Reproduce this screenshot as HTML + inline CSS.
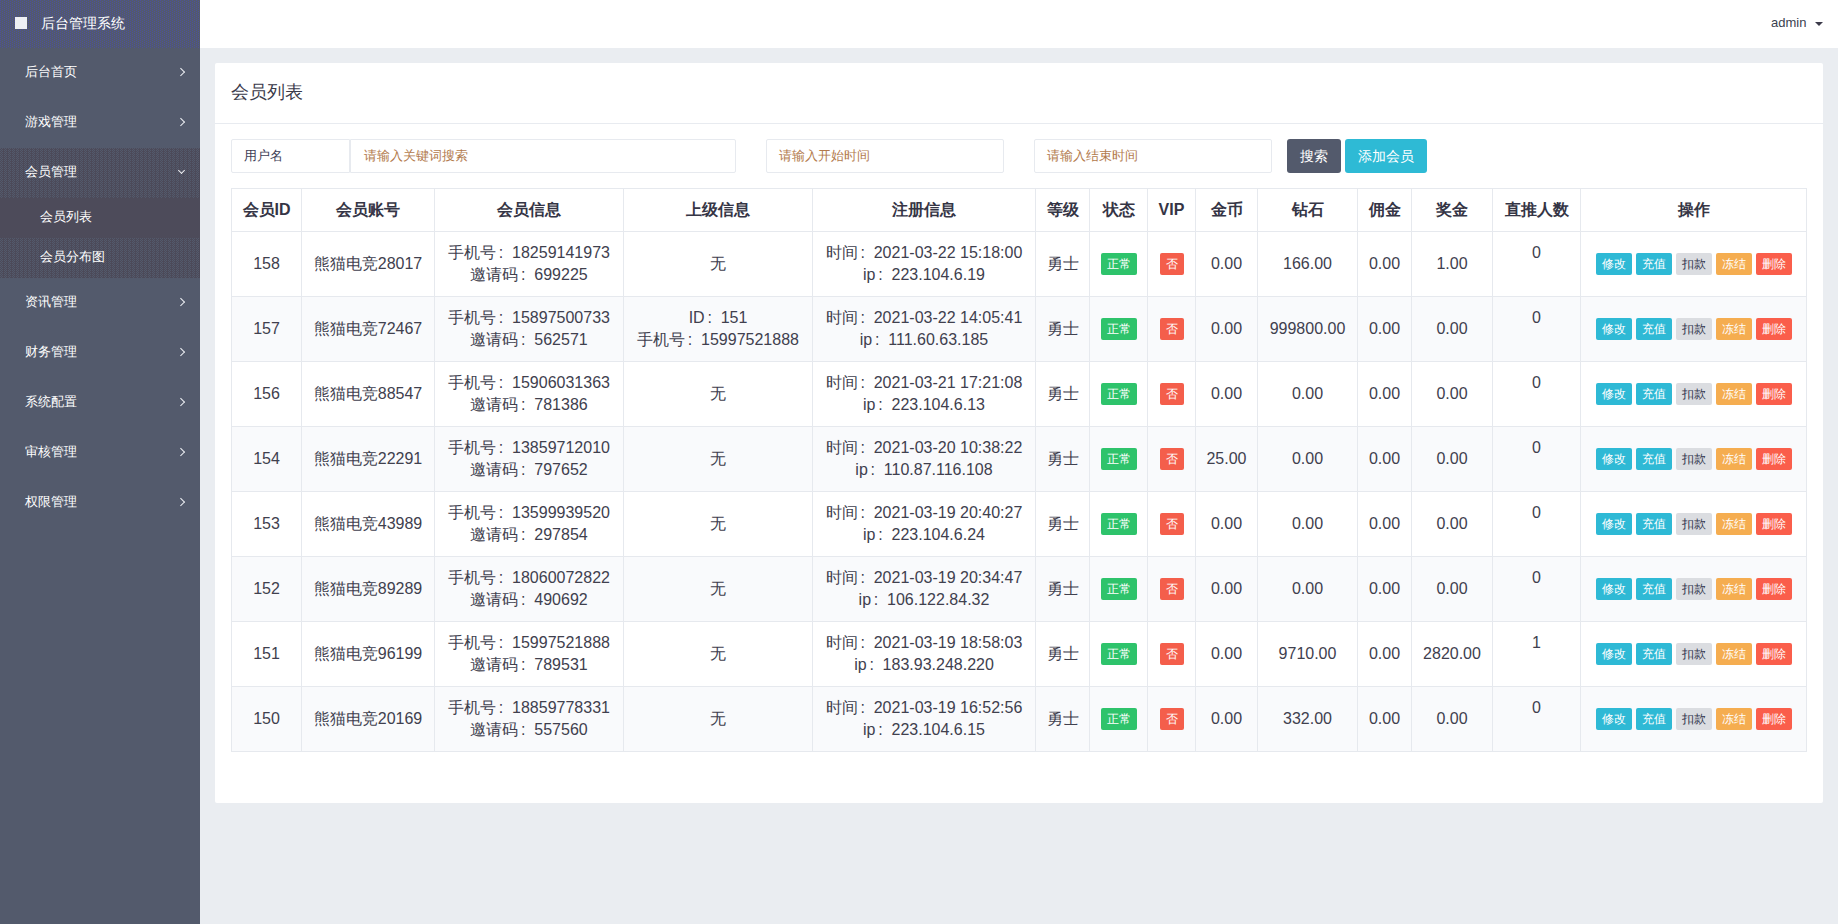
<!DOCTYPE html>
<html><head><meta charset="utf-8">
<style>
*{box-sizing:border-box;margin:0;padding:0}
html,body{width:1838px;height:924px;overflow:hidden}
body{font-family:"Liberation Sans",sans-serif;background:#eaedf1;color:#333;position:relative}
#side{position:absolute;left:0;top:0;width:200px;height:924px;background:#535a6c}
#logo{position:absolute;left:0;top:0;width:200px;height:48px;background:conic-gradient(from 270deg at 1px 1px,#4a4fa0 90deg,transparent 0) 0 0/4px 2px,conic-gradient(from 270deg at 1px 1px,#4a4fa0 90deg,transparent 0) 2px 1px/4px 2px,#535a6b;color:#fff;font-size:14px;line-height:48px}
#logo .sq{position:absolute;left:15px;top:17px;width:12px;height:12px;background:#eef0f4}
#logo .t{position:absolute;left:41px;top:-1px}
.mi{position:absolute;left:0;width:200px;height:50px;line-height:48px;color:#fff;font-size:13px;padding-left:25px}
.mi .ar{position:absolute;left:177.6px;top:20.8px;width:5.6px;height:5.6px;border-right:1.5px solid #eef0f4;border-top:1.5px solid #eef0f4;transform:rotate(45deg)}
.mi .dn{position:absolute;left:179px;top:20px;width:5px;height:5px;border-right:1.4px solid #eef0f4;border-bottom:1.4px solid #eef0f4;transform:rotate(45deg)}
.open{background:conic-gradient(from 270deg at 1px 1px,#535a6c 90deg,transparent 0) 0 0/4px 2px,conic-gradient(from 270deg at 1px 1px,#535a6c 90deg,transparent 0) 2px 0/4px 2px,conic-gradient(from 270deg at 1px 1px,#535a6c 90deg,transparent 0) 1px 1px/4px 2px,#4c4a59}
.sub{position:absolute;left:0;width:200px;height:40px;line-height:38px;color:#fff;font-size:13px;padding-left:40px;background:conic-gradient(from 270deg at 1px 1px,#535a6c 90deg,transparent 0) 0 0/4px 2px,conic-gradient(from 270deg at 1px 1px,#535a6c 90deg,transparent 0) 2px 0/4px 2px,conic-gradient(from 270deg at 1px 1px,#535a6c 90deg,transparent 0) 1px 1px/4px 2px,#4c4a59}
.sub.act{background:#4d4b5a}
#top{position:absolute;left:200px;top:0;width:1638px;height:48px;background:#fff}
#admin{position:absolute;left:1571px;top:0;line-height:46px;font-size:13px;color:#3b3f50}
#caret{position:absolute;left:1615px;top:22px;width:0;height:0;border-left:4px solid transparent;border-right:4px solid transparent;border-top:4px solid #3c3a4a}
#card{position:absolute;left:215px;top:63px;width:1608px;height:740px;background:#fff;border-radius:2px}
#ctitle{position:absolute;left:16px;top:0;height:60px;line-height:58px;font-size:18px;color:#3a3a4a}
#cline{position:absolute;left:0;top:60px;width:1608px;height:1px;background:#e8ebf0}
.box{position:absolute;top:76px;height:34px;border:1px solid #e7eaef;border-radius:2px;font-size:13px;line-height:32px;background:#fff}
.ph{color:#b27a4c}
.btn{position:absolute;top:76px;height:34px;border-radius:3px;color:#fff;font-size:14px;line-height:34px;text-align:center}
table{position:absolute;left:16px;top:125px;border-collapse:collapse;table-layout:fixed;width:1576px}
td,th{border:1px solid #e6e9ee;text-align:center;font-size:16px;color:#40404e;line-height:22px}
th{height:43px;font-weight:bold;color:#353545}
td{height:65px}
tr.s td{background:#f9fafc}
.bd{display:inline-block;vertical-align:top;position:relative;top:0px;height:22px;line-height:22px;font-size:12px;color:#fff;border-radius:2px;padding:0 6px}
.g{background:#2ec36b}
.r{background:#f45e4b}
.ab{display:inline-block;vertical-align:top;width:36px;height:22px;line-height:22px;font-size:12px;color:#fff;border-radius:2px;margin:0 2px}
.c{background:#2eb9d5}.gy{background:#dbdde1;color:#30334a}.o{background:#f5ad50}.rd{background:#fa5e4b}
.cn{display:inline-block;width:16px;padding-left:2.8px;text-align:left}
td.top{vertical-align:top;padding-top:10px}
</style></head><body>
<div id="side">
 <div id="logo"><div class="sq"></div><div class="t">后台管理系统</div></div>
 <div class="mi" style="top:48px">后台首页<i class="ar"></i></div>
 <div class="mi" style="top:98px">游戏管理<i class="ar"></i></div>
 <div class="mi open" style="top:148px">会员管理<i class="dn"></i></div>
 <div class="sub act" style="top:198px">会员列表</div>
 <div class="sub" style="top:238px">会员分布图</div>
 <div class="mi" style="top:278px">资讯管理<i class="ar"></i></div>
 <div class="mi" style="top:328px">财务管理<i class="ar"></i></div>
 <div class="mi" style="top:378px">系统配置<i class="ar"></i></div>
 <div class="mi" style="top:428px">审核管理<i class="ar"></i></div>
 <div class="mi" style="top:478px">权限管理<i class="ar"></i></div>
</div>
<div id="top"><div id="admin">admin</div><div id="caret"></div></div>
<div id="card">
 <div id="ctitle">会员列表</div>
 <div id="cline"></div>
 <div class="box" style="left:16px;width:119px;padding-left:12px;color:#3d3d55;border-radius:2px 0 0 2px">用户名</div>
 <div class="box ph" style="left:135px;width:386px;padding-left:13px;border-radius:0 2px 2px 0">请输入关键词搜索</div>
 <div class="box ph" style="left:551px;width:238px;padding-left:12px">请输入开始时间</div>
 <div class="box ph" style="left:819px;width:238px;padding-left:12px">请输入结束时间</div>
 <div class="btn" style="left:1072px;width:54px;background:#535a6c">搜索</div>
 <div class="btn" style="left:1130px;width:82px;background:#2ebad5">添加会员</div>
 <table>
 <colgroup><col style="width:70px"><col style="width:133px"><col style="width:189px"><col style="width:189px"><col style="width:223px"><col style="width:54px"><col style="width:58px"><col style="width:48px"><col style="width:62px"><col style="width:100px"><col style="width:54px"><col style="width:81px"><col style="width:88px"><col style="width:226px"></colgroup>
 <tr><th>会员ID</th><th>会员账号</th><th>会员信息</th><th>上级信息</th><th>注册信息</th><th>等级</th><th>状态</th><th>VIP</th><th>金币</th><th>钻石</th><th>佣金</th><th>奖金</th><th>直推人数</th><th>操作</th></tr>
 <tr><td>158</td><td>熊猫电竞28017</td><td>手机号<span class="cn">:</span>18259141973<br>邀请码<span class="cn">:</span>699225</td><td>无</td><td>时间<span class="cn">:</span>2021-03-22 15:18:00<br>ip<span class="cn">:</span>223.104.6.19</td><td>勇士</td><td><span class="bd g">正常</span></td><td><span class="bd r">否</span></td><td>0.00</td><td>166.00</td><td>0.00</td><td>1.00</td><td class="top">0</td><td><span class="ab c">修改</span><span class="ab c">充值</span><span class="ab gy">扣款</span><span class="ab o">冻结</span><span class="ab rd">删除</span></td></tr>
 <tr class="s"><td>157</td><td>熊猫电竞72467</td><td>手机号<span class="cn">:</span>15897500733<br>邀请码<span class="cn">:</span>562571</td><td>ID<span class="cn">:</span>151<br>手机号<span class="cn">:</span>15997521888</td><td>时间<span class="cn">:</span>2021-03-22 14:05:41<br>ip<span class="cn">:</span>111.60.63.185</td><td>勇士</td><td><span class="bd g">正常</span></td><td><span class="bd r">否</span></td><td>0.00</td><td>999800.00</td><td>0.00</td><td>0.00</td><td class="top">0</td><td><span class="ab c">修改</span><span class="ab c">充值</span><span class="ab gy">扣款</span><span class="ab o">冻结</span><span class="ab rd">删除</span></td></tr>
 <tr><td>156</td><td>熊猫电竞88547</td><td>手机号<span class="cn">:</span>15906031363<br>邀请码<span class="cn">:</span>781386</td><td>无</td><td>时间<span class="cn">:</span>2021-03-21 17:21:08<br>ip<span class="cn">:</span>223.104.6.13</td><td>勇士</td><td><span class="bd g">正常</span></td><td><span class="bd r">否</span></td><td>0.00</td><td>0.00</td><td>0.00</td><td>0.00</td><td class="top">0</td><td><span class="ab c">修改</span><span class="ab c">充值</span><span class="ab gy">扣款</span><span class="ab o">冻结</span><span class="ab rd">删除</span></td></tr>
 <tr class="s"><td>154</td><td>熊猫电竞22291</td><td>手机号<span class="cn">:</span>13859712010<br>邀请码<span class="cn">:</span>797652</td><td>无</td><td>时间<span class="cn">:</span>2021-03-20 10:38:22<br>ip<span class="cn">:</span>110.87.116.108</td><td>勇士</td><td><span class="bd g">正常</span></td><td><span class="bd r">否</span></td><td>25.00</td><td>0.00</td><td>0.00</td><td>0.00</td><td class="top">0</td><td><span class="ab c">修改</span><span class="ab c">充值</span><span class="ab gy">扣款</span><span class="ab o">冻结</span><span class="ab rd">删除</span></td></tr>
 <tr><td>153</td><td>熊猫电竞43989</td><td>手机号<span class="cn">:</span>13599939520<br>邀请码<span class="cn">:</span>297854</td><td>无</td><td>时间<span class="cn">:</span>2021-03-19 20:40:27<br>ip<span class="cn">:</span>223.104.6.24</td><td>勇士</td><td><span class="bd g">正常</span></td><td><span class="bd r">否</span></td><td>0.00</td><td>0.00</td><td>0.00</td><td>0.00</td><td class="top">0</td><td><span class="ab c">修改</span><span class="ab c">充值</span><span class="ab gy">扣款</span><span class="ab o">冻结</span><span class="ab rd">删除</span></td></tr>
 <tr class="s"><td>152</td><td>熊猫电竞89289</td><td>手机号<span class="cn">:</span>18060072822<br>邀请码<span class="cn">:</span>490692</td><td>无</td><td>时间<span class="cn">:</span>2021-03-19 20:34:47<br>ip<span class="cn">:</span>106.122.84.32</td><td>勇士</td><td><span class="bd g">正常</span></td><td><span class="bd r">否</span></td><td>0.00</td><td>0.00</td><td>0.00</td><td>0.00</td><td class="top">0</td><td><span class="ab c">修改</span><span class="ab c">充值</span><span class="ab gy">扣款</span><span class="ab o">冻结</span><span class="ab rd">删除</span></td></tr>
 <tr><td>151</td><td>熊猫电竞96199</td><td>手机号<span class="cn">:</span>15997521888<br>邀请码<span class="cn">:</span>789531</td><td>无</td><td>时间<span class="cn">:</span>2021-03-19 18:58:03<br>ip<span class="cn">:</span>183.93.248.220</td><td>勇士</td><td><span class="bd g">正常</span></td><td><span class="bd r">否</span></td><td>0.00</td><td>9710.00</td><td>0.00</td><td>2820.00</td><td class="top">1</td><td><span class="ab c">修改</span><span class="ab c">充值</span><span class="ab gy">扣款</span><span class="ab o">冻结</span><span class="ab rd">删除</span></td></tr>
 <tr class="s"><td>150</td><td>熊猫电竞20169</td><td>手机号<span class="cn">:</span>18859778331<br>邀请码<span class="cn">:</span>557560</td><td>无</td><td>时间<span class="cn">:</span>2021-03-19 16:52:56<br>ip<span class="cn">:</span>223.104.6.15</td><td>勇士</td><td><span class="bd g">正常</span></td><td><span class="bd r">否</span></td><td>0.00</td><td>332.00</td><td>0.00</td><td>0.00</td><td class="top">0</td><td><span class="ab c">修改</span><span class="ab c">充值</span><span class="ab gy">扣款</span><span class="ab o">冻结</span><span class="ab rd">删除</span></td></tr>
 </table>
</div>
</body></html>
